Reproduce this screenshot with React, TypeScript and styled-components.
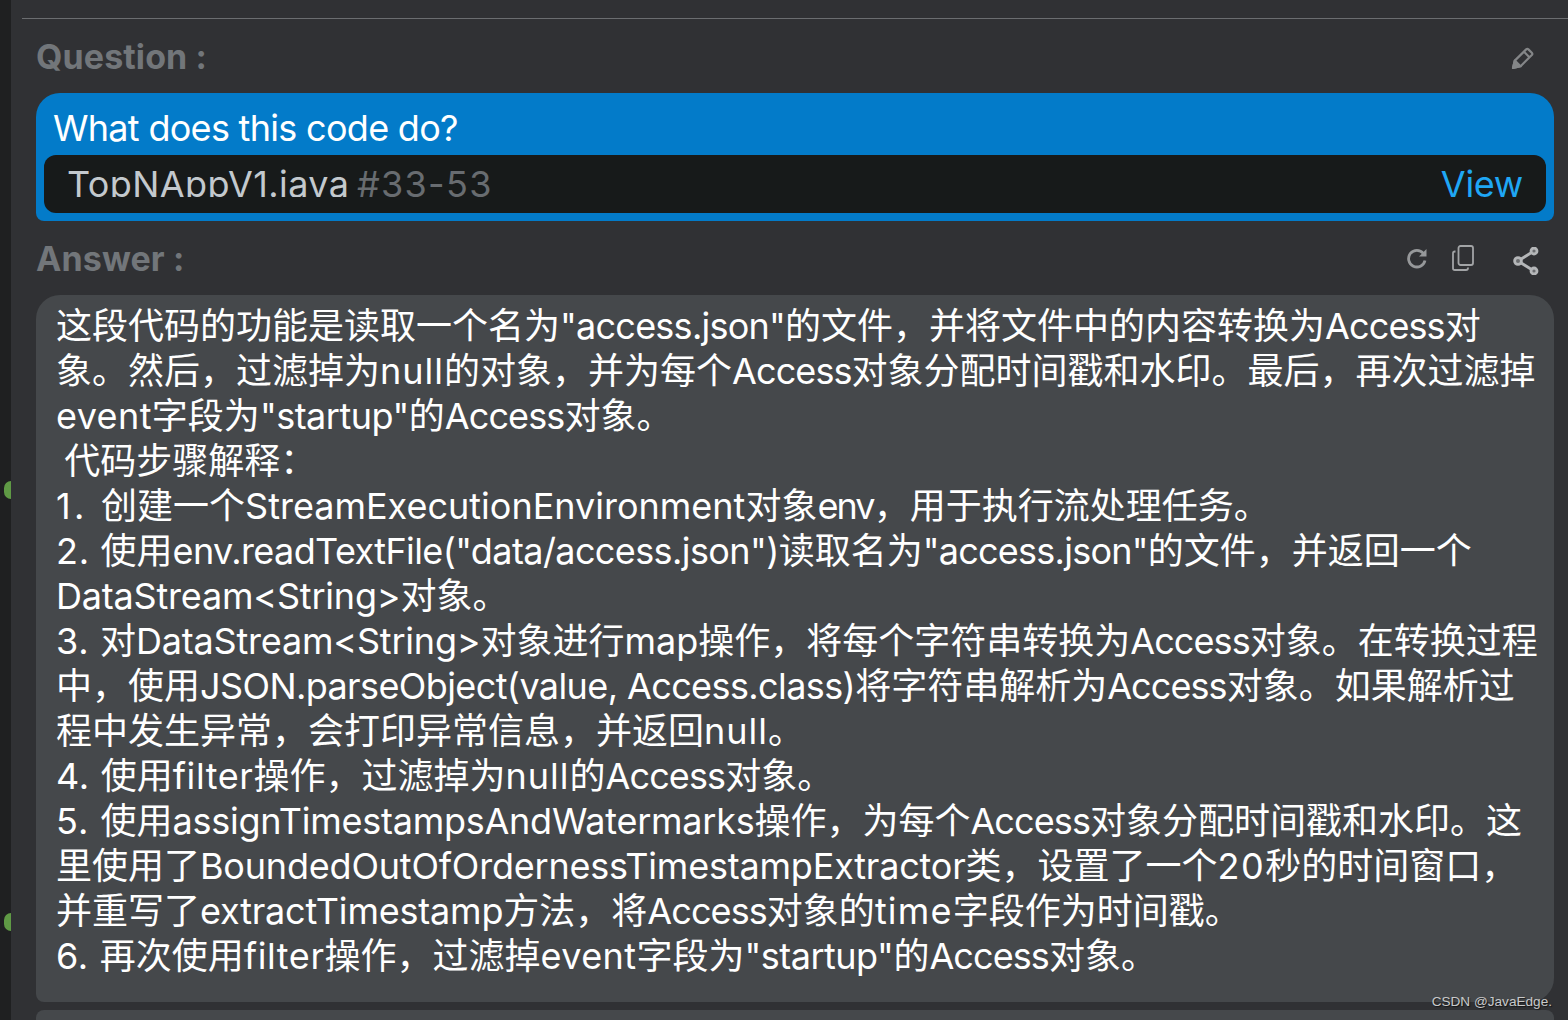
import React from "react";
import styled, { createGlobalStyle } from "styled-components";

const GlobalStyle = createGlobalStyle`
  html, body {
    margin: 0;
    padding: 0;
    height: 1020px;
    overflow: hidden;
    background: #303134;
    font-family: Inter, "Noto Sans CJK SC", sans-serif;
  }
`;

const Page = styled.div`
  display: flex;
  height: 1020px;
  overflow: hidden;
  position: relative;
`;

const Gutter = styled.div`
  width: 11px;
  flex: none;
  background: #1f2021;
  position: relative;
`;

const GutterDot = styled.span<{ $top: number }>`
  position: absolute;
  right: 0;
  top: ${(p) => p.$top}px;
  width: 7px;
  height: 18px;
  border-radius: 9px 0 0 9px;
  background: #5f9a45;
`;

const Panel = styled.main`
  flex: 1;
  min-width: 0;
  padding-top: 18px;
`;

const Divider = styled.div`
  height: 1px;
  margin-left: 11px;
  background: #6b6d70;
`;

const Content = styled.div`
  padding: 0 14px 0 25px;
`;

const SectionHeader = styled.div`
  height: 74px;
  display: flex;
  align-items: center;
  justify-content: space-between;
`;

const SectionTitle = styled.h2`
  margin: 0;
  padding-top: 2px;
  font-size: 34px;
  font-weight: 700;
  letter-spacing: 0.1px;
  color: #72767a;
  line-height: 40px;
`;

const IconRow = styled.div<{ $right: number }>`
  display: flex;
  align-items: center;
  padding-right: ${(p) => p.$right}px;
`;

const IconSlot = styled.span<{ $gap?: number; $top?: number }>`
  display: flex;
  margin-right: ${(p) => p.$gap ?? 0}px;
  padding-top: ${(p) => p.$top ?? 0}px;
`;

const QuestionCard = styled.section`
  height: 128px;
  box-sizing: border-box;
  background: #037bc9;
  border-radius: 24px 24px 8px 8px;
  padding: 0 8px 8px;
  display: flex;
  flex-direction: column;
`;

const QuestionText = styled.div`
  height: 62px;
  padding: 8px 9px 0;
  box-sizing: border-box;
  font-size: 36px;
  line-height: 54px;
  letter-spacing: -0.7px;
  color: #fff;
`;

const FileBar = styled.div`
  height: 58px;
  background: #171a1a;
  border-radius: 12px;
  display: flex;
  justify-content: space-between;
  align-items: flex-start;
  padding: 0 23px;
  overflow: hidden;
`;

const FileName = styled.div`
  height: 42px;
  overflow: hidden;
  font-size: 36px;
  line-height: 58px;
  letter-spacing: 0.4px;
  color: #c3c9ce;
`;

const LineRange = styled.span`
  margin-left: -3px;
  letter-spacing: 1.3px;
  color: #686c70;
`;

const ViewLink = styled.a`
  font-size: 36px;
  line-height: 58px;
  letter-spacing: -0.3px;
  color: #1fa7f5;
`;

const AnswerCard = styled.section`
  height: 707px;
  box-sizing: border-box;
  background: #45484b;
  border-radius: 24px 24px 24px 8px;
  padding: 9px 10px 0 20px;
`;

const AnswerLine = styled.div`
  font-size: 36px;
  line-height: 45px;
  color: #fff;
  white-space: pre;
  font-variant-ligatures: none;
`;

const Latin = styled.span<{ $spacing: number }>`
  letter-spacing: ${(p) => p.$spacing}px;
`;

const NextCard = styled.div`
  margin-top: 8px;
  height: 40px;
  background: #45484b;
  border-radius: 8px 8px 0 0;
`;

const Watermark = styled.div`
  position: absolute;
  right: 16px;
  bottom: 10px;
  font-family: "Liberation Sans", sans-serif;
  font-size: 13.6px;
  line-height: 16px;
  color: #c8c9ca;
  text-shadow: 1px 1px 1px rgba(0, 0, 0, 0.6);
`;

const answerLines = [
  '这段代码的功能是读取一个名为"access.json"的文件，并将文件中的内容转换为Access对',
  "象。然后，过滤掉为null的对象，并为每个Access对象分配时间戳和水印。最后，再次过滤掉",
  'event字段为"startup"的Access对象。',
  " 代码步骤解释：",
  "1. 创建一个StreamExecutionEnvironment对象env，用于执行流处理任务。",
  '2. 使用env.readTextFile("data/access.json")读取名为"access.json"的文件，并返回一个',
  "DataStream<String>对象。",
  "3. 对DataStream<String>对象进行map操作，将每个字符串转换为Access对象。在转换过程",
  "中，使用JSON.parseObject(value, Access.class)将字符串解析为Access对象。如果解析过",
  "程中发生异常，会打印异常信息，并返回null。",
  "4. 使用filter操作，过滤掉为null的Access对象。",
  "5. 使用assignTimestampsAndWatermarks操作，为每个Access对象分配时间戳和水印。这",
  "里使用了BoundedOutOfOrdernessTimestampExtractor类，设置了一个20秒的时间窗口，",
  "并重写了extractTimestamp方法，将Access对象的time字段作为时间戳。",
  '6. 再次使用filter操作，过滤掉event字段为"startup"的Access对象。',
];

// the Latin runs are tracked one by one so the lines end where they do in the screenshot
const tracking: Record<string, number> = {
  '"access.json"': -0.75,
  '"startup"': -0.5,
  Access: -0.9,
  null: 1,
  " ": -2,
  "1. ": 3.3,
  "2. ": 0.7,
  "3. ": 0.7,
  "4. ": 0.7,
  "5. ": 1,
  "6. ": 0.7,
  env: -1.9,
  event: 0.4,
  'env.readTextFile("data/access.json")': -0.6,
  "DataStream<String>": -0.2,
  "JSON.parseObject(value, Access.class)": -0.6,
  filter: 0.6,
  assignTimestampsAndWatermarks: -0.25,
  BoundedOutOfOrdernessTimestampExtractor: -0.2,
  "20": 1.5,
  extractTimestamp: -0.2,
  time: 1.2,
};

const renderLine = (line: string) =>
  line.split(/([\x20-\x7e]+)/).map((part, index) =>
    index % 2 === 1 ? (
      <Latin key={index} $spacing={tracking[part] ?? 0}>
        {part}
      </Latin>
    ) : (
      part
    )
  );

const PencilIcon = () => (
  <svg width="24" height="24" viewBox="0 0 24 24" fill="none" stroke="#848688" strokeWidth="2.2" strokeLinejoin="round">
    <path d="M2 22l1.8-7.4L15.2 3.4a1.6 1.6 0 0 1 2.2 0l3.4 3.4a1.6 1.6 0 0 1 0 2.2L9.6 20.2z" />
    <path d="M13 5.8l5.4 5.4" />
    <path d="M2 22l1.8-7.4 5.8 5.6z" fill="#848688" />
  </svg>
);

const RefreshIcon = () => (
  <svg width="22" height="22" viewBox="0 0 22 22" fill="none" stroke="#96989a" strokeWidth="2.8">
    <path d="M19 13.5a8.3 8.3 0 1 1-1.6-7" />
    <path d="M20.5 2v7.5h-7.5z" fill="#96989a" stroke="none" />
  </svg>
);

const CopyIcon = () => (
  <svg width="22" height="26" viewBox="0 0 22 26" fill="none" stroke="#a2a4a6" strokeWidth="1.8">
    <rect x="6.5" y="1" width="14.5" height="19" rx="2" />
    <path d="M3.5 6.5H2.8A1.8 1.8 0 0 0 1 8.3v14.9A1.8 1.8 0 0 0 2.8 25H14a2 2 0 0 0 2-2v-.5" />
  </svg>
);

const ShareIcon = () => (
  <svg width="26" height="28" viewBox="0 0 26 28" fill="none" stroke="#b4b6b8" strokeWidth="2.8">
    <path d="M5 14L21 4M5 14l16 10" />
    <circle cx="5" cy="14" r="3.4" fill="#6a6c6f" />
    <circle cx="21" cy="4" r="3" fill="#6a6c6f" />
    <circle cx="21" cy="24" r="3" fill="#6a6c6f" />
  </svg>
);

export default function App() {
  return (
    <Page>
      <GlobalStyle />
      <Gutter>
        <GutterDot $top={481} />
        <GutterDot $top={913} />
      </Gutter>
      <Panel>
        <Divider />
        <Content>
          <SectionHeader>
            <SectionTitle>Question :</SectionTitle>
            <IconRow $right={19}>
              <IconSlot $top={4}>
                <PencilIcon />
              </IconSlot>
            </IconRow>
          </SectionHeader>
          <QuestionCard>
            <QuestionText>What does this code do?</QuestionText>
            <FileBar>
              <FileName>
                TopNAppV1.java <LineRange>#33-53</LineRange>
              </FileName>
              <ViewLink>View</ViewLink>
            </FileBar>
          </QuestionCard>
          <SectionHeader>
            <SectionTitle>Answer :</SectionTitle>
            <IconRow $right={15}>
              <IconSlot $gap={24}>
                <RefreshIcon />
              </IconSlot>
              <IconSlot $gap={39}>
                <CopyIcon />
              </IconSlot>
              <IconSlot $top={5}>
                <ShareIcon />
              </IconSlot>
            </IconRow>
          </SectionHeader>
          <AnswerCard>
            {answerLines.map((line, index) => (
              <AnswerLine key={index}>{renderLine(line)}</AnswerLine>
            ))}
          </AnswerCard>
          <NextCard />
        </Content>
      </Panel>
      <Watermark>CSDN @JavaEdge.</Watermark>
    </Page>
  );
}
